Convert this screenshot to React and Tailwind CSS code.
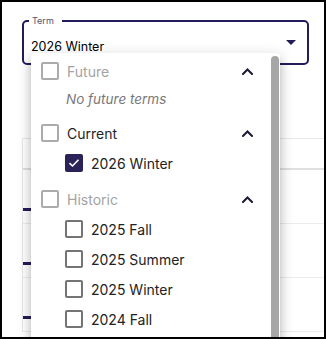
import React from "react";

const Chevron = () => (
  <svg width="11" height="7" viewBox="0 0 11 7" fill="none">
    <path d="M1 6 L5.5 1.5 L10 6" stroke="#1c1a33" strokeWidth="2" strokeLinecap="square" />
  </svg>
);

const Box = ({ tone }) => (
  <span
    className={
      tone === "group"
        ? "block w-[18px] h-[18px] border-2 border-[#ababab] rounded-[2px] shrink-0"
        : "block w-[18px] h-[18px] border-2 border-[#747474] rounded-[2px] shrink-0"
    }
  />
);

const Checked = () => (
  <span className="flex items-center justify-center w-[18px] h-[18px] bg-[#2b2358] rounded-[2px] shrink-0">
    <svg width="12" height="10" viewBox="0 0 12 10" fill="none">
      <path d="M1.5 5.2 L4.5 8 L10.5 1.8" stroke="#ffffff" strokeWidth="1.6" />
    </svg>
  </span>
);

const Header = ({ label, muted }) => (
  <div className="h-[30px] flex items-center pl-[10px] pr-[27px] gap-[8px]">
    <Box tone="group" />
    <span className={muted ? "flex-1 text-[14px] text-[#a3a3a3]" : "flex-1 text-[14px] text-[#1f1f1f]"}>{label}</span>
    <Chevron />
  </div>
);

const Item = ({ label, checked }) => (
  <div className="h-[30px] flex items-center pl-[34px] gap-[8px]">
    {checked ? <Checked /> : <Box tone="item" />}
    <span className="text-[14px] text-[#222222]">{label}</span>
  </div>
);

export default function App() {
  return (
    <div
      className="w-[326px] h-[339px] border-2 border-black bg-white relative overflow-hidden"
      style={{ fontFamily: "Inter, 'Noto Sans', sans-serif" }}
    >
      <div className="ml-[20px] mt-[18px] w-[287px] h-[45px] border-2 border-[#231c5a] rounded-[5px] relative flex items-center justify-between pl-[7px] pr-[11px]">
        <span className="absolute left-[5px] top-[-7px] bg-white pl-[3px] pr-[8px] text-[9px] leading-[12px] text-[#4f5170]">
          Term
        </span>
        <span className="mt-[9px] text-[12.5px] text-black">2026 Winter</span>
        <svg width="10" height="5" viewBox="0 0 10 5">
          <path d="M0 0 L10 0 L5 5 Z" fill="#231c5a" />
        </svg>
      </div>

      <div className="ml-[20px] mt-[73px] border-l border-t border-[#e8e8e8] flex flex-col">
        <div className="h-[31px] border-b-2 border-[#e0e0e0]" />
        {[0, 1, 2].map((i) => (
          <div key={i} className="h-[54px] border-b border-[#ececec] flex flex-col">
            <div className="mt-[38px] w-[8px] h-[3px] bg-[#231c5a]" />
          </div>
        ))}
      </div>

      <div className="absolute left-[29px] top-[51px] w-[249px] h-[320px] bg-white rounded-t-[4px] shadow-[0_5px_5px_-3px_rgba(0,0,0,0.2),0_8px_10px_1px_rgba(0,0,0,0.14),0_3px_14px_2px_rgba(0,0,0,0.12)] pt-[3px]">
        <div className="absolute right-[1px] top-[3px] w-[8px] h-[400px] rounded-full bg-[#a6a6a6]" />
        <div className="pb-[6px]">
          <Header label="Future" muted />
          <div className="h-[26px] pt-[3px] pl-[35px] leading-[20px] text-[13.5px] italic text-[#777777]">No future terms</div>
        </div>
        <div className="pb-[6px]">
          <Header label="Current" />
          <Item label="2026 Winter" checked />
        </div>
        <div>
          <Header label="Historic" muted />
          <Item label="2025 Fall" />
          <Item label="2025 Summer" />
          <Item label="2025 Winter" />
          <Item label="2024 Fall" />
        </div>
      </div>
    </div>
  );
}
